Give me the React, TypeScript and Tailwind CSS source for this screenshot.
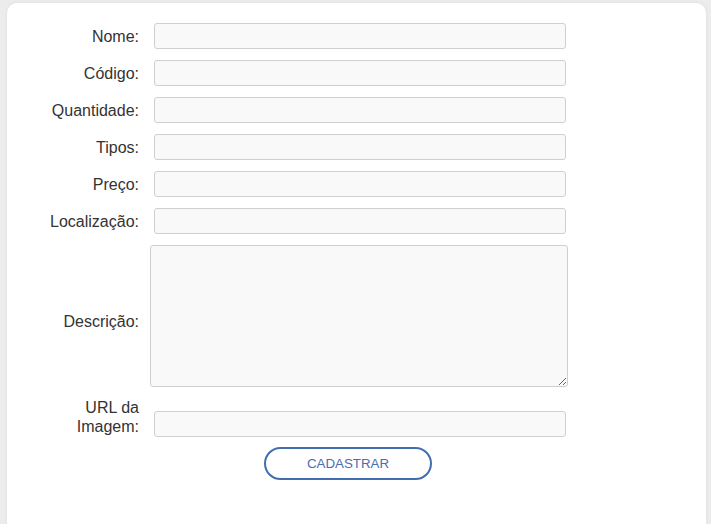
const campos = ["Nome:", "Código:", "Quantidade:", "Tipos:", "Preço:", "Localização:"];

const inputCls =
  "ml-[15px] mr-[4px] h-[26px] w-[412px] rounded-[3px] border border-[#cfcfcf] bg-[#f9f9f9] px-2 text-[14px] outline-none";

export default function App() {
  return (
    <div className="min-h-screen bg-[#ececec] pt-[3px] pl-[7px] pr-[5px] font-['Liberation_Sans',Arial,sans-serif] text-[16px] text-[#333]">
      <div className="h-[540px] rounded-[10px] bg-white pt-[20px] shadow-[0_0_4px_rgba(0,0,0,0.06)]">
        <form className="flex flex-col gap-[11px]">
          {campos.map((c) => (
            <div key={c} className="flex items-center">
              <label className="w-[132px] text-right leading-[19px]">{c}</label>
              <input className={inputCls} />
            </div>
          ))}
          <div className="flex items-center">
            <label className="mt-[10px] w-[132px] text-right leading-[19px]">Descrição:</label>
            <textarea className="ml-[11px] h-[142px] w-[418px] rounded-[3px] border border-[#cfcfcf] bg-[#f9f9f9] outline-none" />
          </div>
          <div className="flex items-end">
            <label className="w-[132px] text-right leading-[19px]">
              URL da
              <br />
              Imagem:
            </label>
            <input className={`mb-[-1px] ${inputCls}`} />
          </div>
          <div className="pl-[257px]">
            <button
              type="button"
              className="h-[33px] w-[168px] rounded-full border-2 border-[#426db0] bg-white text-[13.333px] text-[#4a6db0]"
            >
              CADASTRAR
            </button>
          </div>
        </form>
      </div>
    </div>
  );
}
